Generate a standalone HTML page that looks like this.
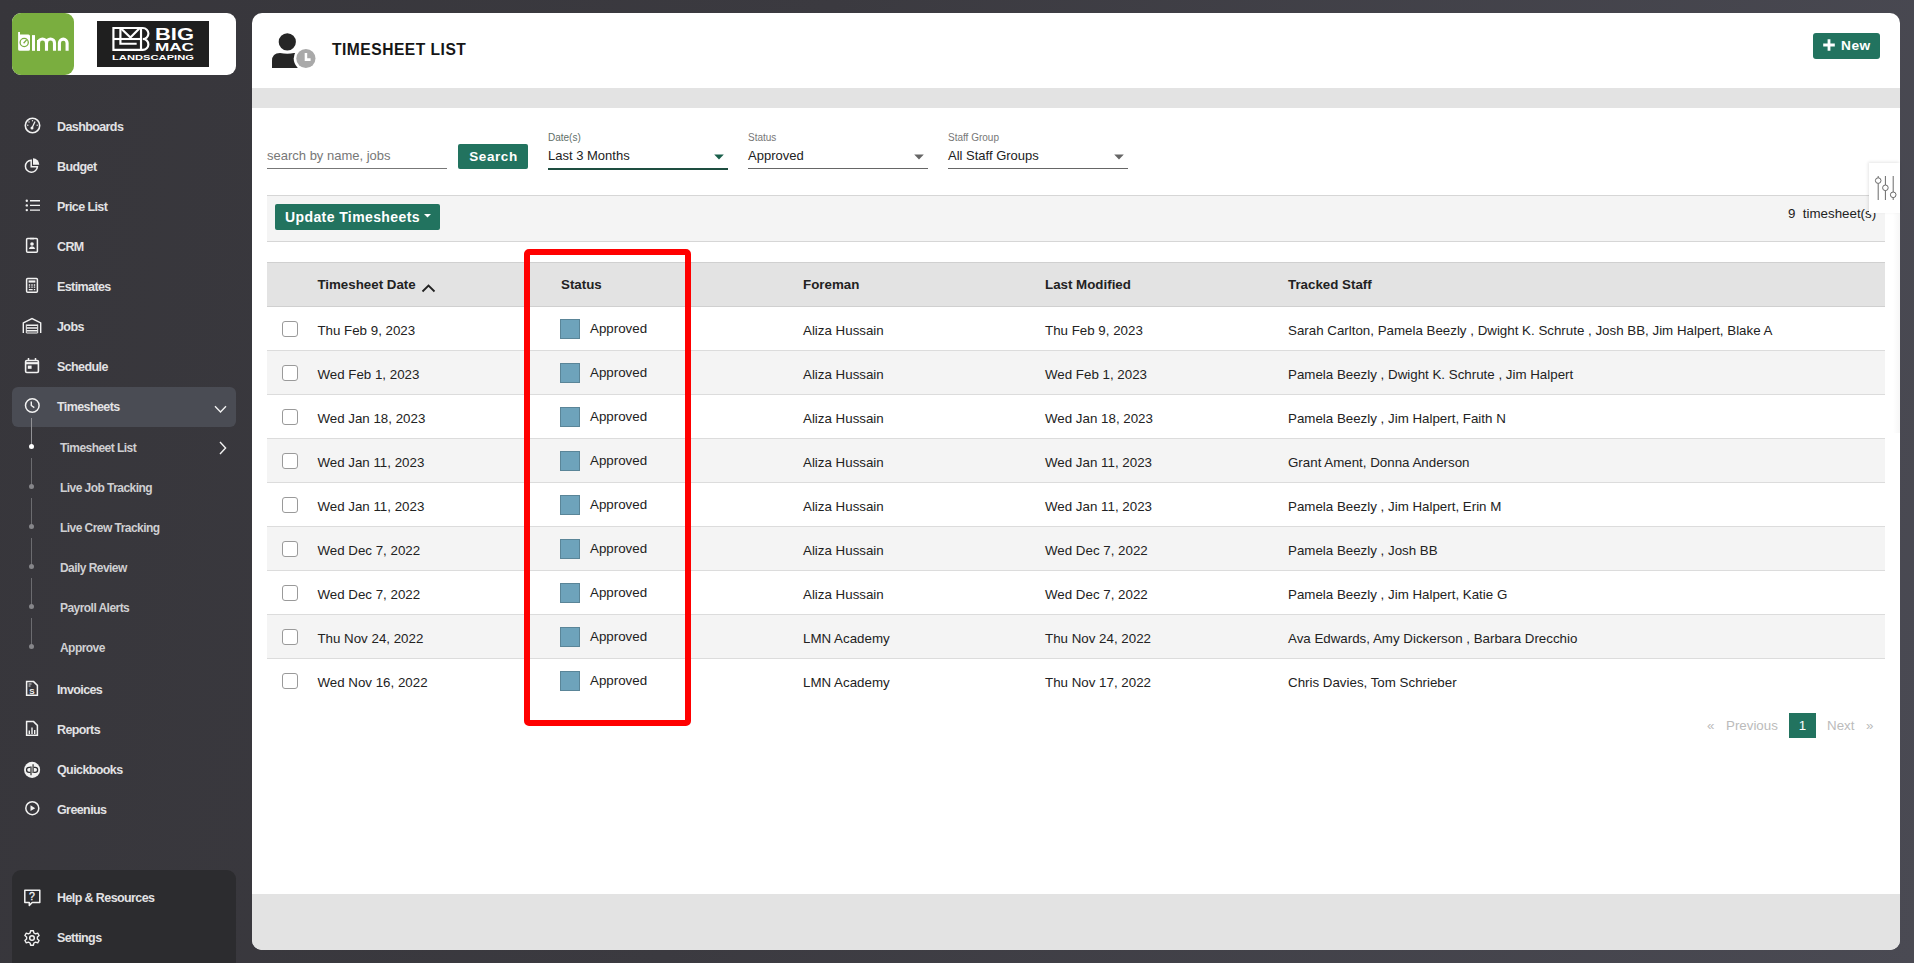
<!DOCTYPE html>
<html><head><meta charset="utf-8">
<style>
*{box-sizing:border-box;margin:0;padding:0}
html,body{width:1914px;height:963px;overflow:hidden}
body{font-family:"Liberation Sans",sans-serif;background:linear-gradient(100deg,#37363b 0%,#3b3a40 40%,#4a4a53 100%);position:relative;color:#222}
.abs{position:absolute}
/* sidebar */
.logo{left:12px;top:12.5px;width:224px;height:62.5px;background:#fff;border-radius:9px}
.lmn{left:12px;top:13px;width:62px;height:62px;background:#7aae3f;border-radius:9px}
.bm{left:97px;top:21px;width:112px;height:46px;background:#1f1f1f}
.nav{left:57px;margin-top:0.6px;font-size:12.5px;font-weight:700;color:#e2e2e4;letter-spacing:-0.6px;white-space:nowrap;line-height:14px}
.ico{left:24px;width:17px;height:17px}
.sub{left:60px;margin-top:0.4px;font-size:12px;font-weight:700;color:#cfcfd2;letter-spacing:-0.55px;white-space:nowrap;line-height:14px}
.dot{left:29px;width:5px;height:5px;border-radius:50%;background:#8a8a8e}
.vline{left:31px;width:1px;background:#5c5c60}
/* card */
.card{left:252px;top:12.5px;width:1648px;height:937px;background:#fff;border-radius:10px;overflow:hidden}
.t{white-space:nowrap;font-size:13.33px;line-height:16px;color:#222}
.b{font-weight:700}
.btn{background:#22735f;color:#fff;font-weight:700;border-radius:2px}
.row{left:267px;width:1618px;height:44px;border-top:1px solid #dcdcdc}
.cb{left:282px;width:16px;height:16px;border:1px solid #9a9a9a;border-radius:3px;background:#fff}
.sq{left:560px;width:20px;height:20px;background:#6ea3bb;border:1px solid #5a8598}
</style></head><body>
<!-- SIDEBAR -->
<div class="abs logo"></div>
<div class="abs lmn"></div>
<svg class="abs" style="left:14px;top:26px" width="60" height="30" viewBox="0 0 60 30">
<path d="M4.1 6 H6 V8.5 H14.4 Q16 8.5 16 10.1 V23.2 Q16 24.8 14.4 24.8 H5.7 Q4.1 24.8 4.1 23.2 Z" fill="#fff"/>
<circle cx="10.2" cy="16.5" r="4.1" fill="none" stroke="#7aae3f" stroke-width="1.3"/>
<path d="M9.6 17.2 L12.8 13.6" stroke="#7aae3f" stroke-width="1.3"/>
<rect x="18" y="9.1" width="3" height="15.7" fill="#fff"/>
<path d="M24.5 24.8 V17 A4 4 0 0 1 32.5 17 V24.8 M32.5 17 A4 4 0 0 1 40.5 17 V24.8" fill="none" stroke="#fff" stroke-width="3.1"/>
<path d="M45.4 24.8 V17 A3.8 3.8 0 0 1 53.1 17 V24.8" fill="none" stroke="#fff" stroke-width="3.1"/>
<rect x="23" y="14" width="3" height="10.8" fill="#fff"/>
</svg>
<div class="abs bm"></div>
<svg class="abs" style="left:97px;top:21px" width="112" height="46" viewBox="0 0 112 46">
<g transform="translate(11,3) translate(22.9,15) scale(0.945,0.92) translate(-22.9,-15)" fill="none" stroke="#fff" stroke-width="2.3">
<path d="M33.6 3.1 H4.4 V26.8 H33.6"/>
<path d="M4.4 15 H33.6"/>
<path d="M11.8 3.1 V20.2 H29"/>
<path d="M33.6 3.1 V26.8"/>
<path d="M12.5 3.6 L22.4 13.4 L31.8 3.6"/>
<path d="M33.6 3.1 H35.5 A5.95 5.95 0 0 1 35.5 15 A5.9 5.9 0 0 1 35.5 26.8 H33.6"/>
</g>
<text x="58" y="19.3" font-family="Liberation Sans" font-weight="700" font-size="16.5" fill="#fff" textLength="39" lengthAdjust="spacingAndGlyphs">BIG</text>
<text x="58" y="30.2" font-family="Liberation Sans" font-weight="700" font-size="11.5" fill="#fff" textLength="39" lengthAdjust="spacingAndGlyphs">MAC</text>
<text x="15" y="39.3" font-family="Liberation Sans" font-weight="700" font-size="7.6" fill="#fff" textLength="82" lengthAdjust="spacingAndGlyphs">LANDSCAPING</text>
</svg>
<div id="navs">
<div class="abs" style="left:12px;top:387px;width:224px;height:40px;background:#4a4c54;border-radius:6px"></div>
<div class="abs" style="left:12px;top:870px;width:224px;height:100px;background:#2c2c2f;border-radius:9px"></div>
<div class="abs nav" style="top:119.4px">Dashboards</div>
<svg class="abs" style="left:24px;top:117px" width="17" height="17" viewBox="0 0 17 17"><circle cx="8.5" cy="8.5" r="7.2" fill="none" stroke="#f2f2f2" stroke-width="1.6"/><circle cx="8" cy="11" r="1.5" fill="#f2f2f2"/><path d="M8 11 L11 4.5" stroke="#f2f2f2" stroke-width="1.3"/><circle cx="5" cy="5" r="0.7" fill="#f2f2f2"/><circle cx="8.5" cy="3.8" r="0.7" fill="#f2f2f2"/><circle cx="3.8" cy="8.3" r="0.7" fill="#f2f2f2"/><circle cx="13.2" cy="8.3" r="0.7" fill="#f2f2f2"/></svg>
<div class="abs nav" style="top:159.4px">Budget</div>
<svg class="abs" style="left:24px;top:157px" width="17" height="17" viewBox="0 0 17 17"><path d="M7.2 3.2 A6 6 0 1 0 13.4 9.8 L7.2 9.8 Z" fill="none" stroke="#f2f2f2" stroke-width="1.5"/><path d="M9 1.2 A6.5 6.5 0 0 1 15.3 7.8 L9 7.8 Z" fill="#f2f2f2"/></svg>
<div class="abs nav" style="top:199.4px">Price List</div>
<svg class="abs" style="left:24px;top:198px" width="17" height="15" viewBox="0 0 17 15"><circle cx="2.8" cy="2.8" r="1.2" fill="#f2f2f2"/><circle cx="2.8" cy="7.4" r="1.2" fill="#f2f2f2"/><circle cx="2.8" cy="12.1" r="1.2" fill="#f2f2f2"/><path d="M6 2.8H16M6 7.4H16M6 12.1H16" stroke="#f2f2f2" stroke-width="1.4"/></svg>
<div class="abs nav" style="top:239.4px">CRM</div>
<svg class="abs" style="left:25px;top:237px" width="14" height="17" viewBox="0 0 14 17"><rect x="1.6" y="1.6" width="10.8" height="13.6" rx="1" fill="none" stroke="#f2f2f2" stroke-width="1.5"/><path d="M5 1.6 H9" stroke="#f2f2f2" stroke-width="1.5"/><circle cx="7" cy="7" r="1.8" fill="#f2f2f2"/><path d="M3.8 12 Q4.5 9.3 7 9.3 Q9.5 9.3 10.2 12 Z" fill="#f2f2f2"/></svg>
<div class="abs nav" style="top:279.4px">Estimates</div>
<svg class="abs" style="left:25px;top:277px" width="14" height="17" viewBox="0 0 14 17"><rect x="1.6" y="1.6" width="10.8" height="13.6" rx="1" fill="none" stroke="#f2f2f2" stroke-width="1.5"/><rect x="3.6" y="3.4" width="6.8" height="2.2" fill="#f2f2f2"/><path d="M3.8 8H5.2M6.3 8H7.7M8.8 8H10.2M3.8 10.2H5.2M6.3 10.2H7.7M8.8 10.2H10.2M3.8 12.6H7.7M8.8 12.6H10.2" stroke="#f2f2f2" stroke-width="1.3"/></svg>
<div class="abs nav" style="top:319.4px">Jobs</div>
<svg class="abs" style="left:22px;top:317px" width="20" height="17" viewBox="0 0 20 17"><path d="M1.3 16 V6 L10 1.6 L18.7 6 V16" fill="none" stroke="#f2f2f2" stroke-width="1.4"/><path d="M4.5 8.2H15.5M4.5 11H15.5M4.5 13.8H15.5" stroke="#f2f2f2" stroke-width="1.6"/><path d="M4.5 16H15.5" stroke="#f2f2f2" stroke-width="1"/><path d="M4.3 7.5V16M15.7 7.5V16" stroke="#f2f2f2" stroke-width="1"/></svg>
<div class="abs nav" style="top:359.4px">Schedule</div>
<svg class="abs" style="left:24px;top:357px" width="16" height="17" viewBox="0 0 16 17"><rect x="1.6" y="3.5" width="12.8" height="12" rx="1.2" fill="none" stroke="#f2f2f2" stroke-width="1.6"/><path d="M1.6 6.2H14.4" stroke="#f2f2f2" stroke-width="2.2"/><path d="M4.5 1V4M11.5 1V4" stroke="#f2f2f2" stroke-width="1.5"/><rect x="3.8" y="8.6" width="3.8" height="3.2" fill="#f2f2f2"/></svg>
<div class="abs nav" style="top:399.2px">Timesheets</div>
<svg class="abs" style="left:24px;top:397px" width="17" height="17" viewBox="0 0 17 17"><circle cx="8.3" cy="8.5" r="6.8" fill="none" stroke="#f2f2f2" stroke-width="1.5"/><path d="M7.3 4.5V8.5L10.3 10.6" fill="none" stroke="#f2f2f2" stroke-width="1.4"/></svg>
<div class="abs nav" style="top:682.2px">Invoices</div>
<svg class="abs" style="left:25px;top:680px" width="14" height="17" viewBox="0 0 14 17"><path d="M1.6 1.6H8.6L12.4 5.4V15.2H1.6Z" fill="none" stroke="#f2f2f2" stroke-width="1.5"/><path d="M3.6 4H6.5M3.6 6H5.5" stroke="#f2f2f2" stroke-width="0.9"/><text x="4.2" y="14" font-family="Liberation Sans" font-size="8" font-weight="700" fill="#f2f2f2">S</text></svg>
<div class="abs nav" style="top:722.2px">Reports</div>
<svg class="abs" style="left:25px;top:720px" width="14" height="17" viewBox="0 0 14 17"><path d="M1.6 1.6H8.6L12.4 5.4V15.2H1.6Z" fill="none" stroke="#f2f2f2" stroke-width="1.5"/><path d="M4.3 14V10.5M7 14V7.5M9.7 14V10" stroke="#f2f2f2" stroke-width="1.4"/></svg>
<div class="abs nav" style="top:762.2px">Quickbooks</div>
<svg class="abs" style="left:24px;top:761px" width="17" height="17" viewBox="0 0 17 17"><circle cx="8.1" cy="8.9" r="8.05" fill="#f2f2f2"/><path d="M6.9 6.3 H5.1 A2.55 2.55 0 0 0 5.1 11.4 H6.9 M9.3 6.3 H11.1 A2.55 2.55 0 0 1 11.1 11.4 H9.3" fill="none" stroke="#2e2e32" stroke-width="1.3"/><path d="M7 5.6 V14.3 M9.1 3.3 V12" stroke="#555" stroke-width="1.5"/></svg>
<div class="abs nav" style="top:802.2px">Greenius</div>
<svg class="abs" style="left:24px;top:800px" width="17" height="17" viewBox="0 0 17 17"><circle cx="8.3" cy="8.2" r="6.5" fill="none" stroke="#f2f2f2" stroke-width="1.5"/><path d="M6.5 5.3V11.1L11.2 8.2Z" fill="#f2f2f2"/></svg>
<div class="abs nav" style="top:890.2px">Help &amp; Resources</div>
<svg class="abs" style="left:23px;top:888px" width="18" height="19" viewBox="0 0 18 19"><path d="M1.8 2.2H16.8V14.5H9.2L6.3 17.4V14.5H1.8Z" fill="none" stroke="#f2f2f2" stroke-width="1.5" stroke-linejoin="round"/><text x="6" y="12.2" font-family="Liberation Sans" font-size="10.5" font-weight="400" stroke="#f2f2f2" stroke-width="0.3" fill="#f2f2f2">?</text></svg>
<div class="abs nav" style="top:930.2px">Settings</div>
<svg class="abs" style="left:23px;top:929px" width="18" height="18" viewBox="0 0 18 18"><path d="M7.6 1.3H10.4L10.9 3.5L12.6 4.4L14.7 3.6L16.1 6L14.4 7.5V9.5L16.1 11L14.7 13.4L12.6 12.6L10.9 13.5L10.4 15.7H7.6L7.1 13.5L5.4 12.6L3.3 13.4L1.9 11L3.6 9.5V7.5L1.9 6L3.3 3.6L5.4 4.4L7.1 3.5Z" transform="translate(0,0.5)" fill="none" stroke="#f2f2f2" stroke-width="1.4" stroke-linejoin="round"/><circle cx="9" cy="9" r="2.3" fill="none" stroke="#f2f2f2" stroke-width="1.5"/></svg>
<div class="abs" style="left:31px;top:418px;width:1px;height:28px;background:#929296"></div>
<div class="abs" style="left:28.6px;top:443.6px;width:5.6px;height:5.6px;border-radius:50%;background:#fff"></div>
<div class="abs sub" style="top:440.6px">Timesheet List</div>
<div class="abs" style="left:31px;top:458.4px;width:1px;height:28px;background:#6c6c70"></div>
<div class="abs" style="left:28.6px;top:483.6px;width:5.6px;height:5.6px;border-radius:50%;background:#86868a"></div>
<div class="abs sub" style="top:480.4px">Live Job Tracking</div>
<div class="abs" style="left:31px;top:498.4px;width:1px;height:28px;background:#6c6c70"></div>
<div class="abs" style="left:28.6px;top:523.6px;width:5.6px;height:5.6px;border-radius:50%;background:#86868a"></div>
<div class="abs sub" style="top:520.4px">Live Crew Tracking</div>
<div class="abs" style="left:31px;top:538.4px;width:1px;height:28px;background:#6c6c70"></div>
<div class="abs" style="left:28.6px;top:563.6px;width:5.6px;height:5.6px;border-radius:50%;background:#86868a"></div>
<div class="abs sub" style="top:560.4px">Daily Review</div>
<div class="abs" style="left:31px;top:578.4px;width:1px;height:28px;background:#6c6c70"></div>
<div class="abs" style="left:28.6px;top:603.6px;width:5.6px;height:5.6px;border-radius:50%;background:#86868a"></div>
<div class="abs sub" style="top:600.4px">Payroll Alerts</div>
<div class="abs" style="left:31px;top:618.4px;width:1px;height:28px;background:#6c6c70"></div>
<div class="abs" style="left:28.6px;top:643.6px;width:5.6px;height:5.6px;border-radius:50%;background:#86868a"></div>
<div class="abs sub" style="top:640.4px">Approve</div>
<svg class="abs" style="left:213px;top:403px" width="15" height="12" viewBox="0 0 15 12"><path d="M2 3.3 L7.5 9 L13 3.3" fill="none" stroke="#f2f2f2" stroke-width="1.4"/></svg>
<svg class="abs" style="left:217px;top:440px" width="11" height="16" viewBox="0 0 11 16"><path d="M3 2 L8.6 8 L3 14" fill="none" stroke="#f2f2f2" stroke-width="1.4"/></svg>
</div>
<!-- CARD -->
<div class="abs card">
  <div class="abs" style="left:0;top:75.5px;width:1648px;height:20px;background:#e3e3e3"></div>
  <div class="abs" style="left:0;top:881.5px;width:1648px;height:60px;background:#e3e3e3"></div>
</div>
<div class="abs t b" style="left:332px;top:40.5px;font-size:15.6px;line-height:18px;color:#161616;letter-spacing:0.5px">TIMESHEET LIST</div>
<svg class="abs" style="left:265px;top:25px" width="60" height="50" viewBox="0 0 60 50">
<defs><mask id="mk"><rect x="0" y="0" width="60" height="50" fill="#fff"/><circle cx="40.9" cy="33.5" r="12.2" fill="#000"/></mask></defs>
<circle cx="22.3" cy="16.9" r="8.6" fill="#262626"/>
<path d="M7 43.1 V36 Q7 28 15 28 Q18.5 28.8 22.3 28.8 Q26 28.8 29 28 H33.2 V43.1 Z" fill="#262626" mask="url(#mk)"/>
<circle cx="40.9" cy="33.5" r="9.6" fill="#a9a9a9"/>
<path d="M39.7 28 H42.2 V33.3 H45.6 V35.9 H39.7 Z" fill="#fff"/>
</svg>
<div class="abs btn" style="left:1813px;top:33px;width:67px;height:26px;border-radius:3px"></div>
<svg class="abs" style="left:1823px;top:39px" width="12" height="12" viewBox="0 0 12 12"><path d="M6 0.2V11.8M0.2 6H11.8" stroke="#fff" stroke-width="2.8"/></svg>
<div class="abs t b" style="left:1841px;top:37.5px;font-size:13.7px;color:#fff;letter-spacing:0.5px">New</div>

<!-- filters -->
<div class="abs t" style="left:267px;top:148px;color:#777;font-size:13px">search by name, jobs</div>
<div class="abs" style="left:267px;top:168px;width:180px;height:1px;background:#777"></div>
<div class="abs btn" style="left:458px;top:144px;width:70px;height:25px;font-size:13.5px;line-height:25px;text-align:center;letter-spacing:0.6px;padding-left:1px">Search</div>

<div class="abs t" style="left:548px;top:132px;font-size:10px;line-height:12px;color:#5f6f68">Date(s)</div>
<div class="abs t" style="left:548px;top:148px;font-size:13px">Last 3 Months</div>
<div class="abs" style="left:548px;top:168px;width:180px;height:2px;background:#1e4d40"></div>
<svg class="abs" style="left:714px;top:153.5px" width="10" height="6" viewBox="0 0 10 6"><path d="M0.2 0.5H9.8L5 5.5Z" fill="#1a5f4b"/></svg>
<div class="abs t" style="left:748px;top:132px;font-size:10px;line-height:12px;color:#777">Status</div>
<div class="abs t" style="left:748px;top:148px;font-size:13px">Approved</div>
<div class="abs" style="left:748px;top:168px;width:180px;height:1px;background:#666"></div>
<svg class="abs" style="left:914px;top:153.5px" width="10" height="6" viewBox="0 0 10 6"><path d="M0.2 0.5H9.8L5 5.5Z" fill="#666"/></svg>
<div class="abs t" style="left:948px;top:132px;font-size:10px;line-height:12px;color:#777">Staff Group</div>
<div class="abs t" style="left:948px;top:148px;font-size:13px">All Staff Groups</div>
<div class="abs" style="left:948px;top:168px;width:180px;height:1px;background:#666"></div>
<svg class="abs" style="left:1113.7px;top:153.5px" width="10" height="6" viewBox="0 0 10 6"><path d="M0.2 0.5H9.8L5 5.5Z" fill="#666"/></svg>

<!-- toolbar -->
<div class="abs" style="left:267px;top:195px;width:1618px;height:47px;background:#f4f4f4;border-top:1px solid #d6d6d6;border-bottom:1px solid #d6d6d6"></div>
<div class="abs btn" style="left:275px;top:204px;width:165px;height:26px;font-size:14px;line-height:26px;padding-left:10px;letter-spacing:0.4px">Update Timesheets</div>
<svg class="abs" style="left:424px;top:214px" width="7" height="4" viewBox="0 0 7 4"><path d="M0 0H7L3.5 3.5Z" fill="#fff"/></svg>
<div class="abs t" style="left:1788px;top:206px">9&nbsp; timesheet(s)</div>
<div class="abs" style="left:1869px;top:163px;width:31px;height:50px;background:#fff;box-shadow:-1px -1px 3px rgba(0,0,0,0.10)"></div>
<svg class="abs" style="left:1869px;top:163px" width="31" height="50" viewBox="0 0 31 50">
<g stroke="#6a6a6a" stroke-width="1" fill="#fff">
<path d="M9.2 13V37M16.4 13V37M24.2 13V37"/>
<circle cx="9.2" cy="17.6" r="2.8"/><circle cx="16.4" cy="24.8" r="2.8"/><circle cx="24.2" cy="31.8" r="2.8"/>
</g></svg>

<!-- table header -->
<div class="abs" style="left:267px;top:262px;width:1618px;height:45px;background:#e3e3e3;border-top:1px solid #d0d0d0;border-bottom:1px solid #d0d0d0"></div>
<div class="abs t b" style="left:317.4px;top:277px">Timesheet Date</div>
<svg class="abs" style="left:421px;top:283px" width="15" height="10" viewBox="0 0 15 10"><path d="M1.5 8.5L7.5 2.5L13.5 8.5" fill="none" stroke="#222" stroke-width="1.8"/></svg>
<div class="abs t b" style="left:561px;top:277px">Status</div>
<div class="abs t b" style="left:803px;top:277px">Foreman</div>
<div class="abs t b" style="left:1045px;top:277px">Last Modified</div>
<div class="abs t b" style="left:1288px;top:277px">Tracked Staff</div>

<div id="rows">
<div class="abs" style="left:267px;top:306px;width:1618px;height:44px;background:#fff;border-top:1px solid #d0d0d0;"></div>
<div class="abs cb" style="top:321px"></div>
<div class="abs t" style="left:317.4px;top:323px">Thu Feb 9, 2023</div>
<div class="abs sq" style="top:319px"></div>
<div class="abs t" style="left:590px;top:321px">Approved</div>
<div class="abs t" style="left:803px;top:323px">Aliza Hussain</div>
<div class="abs t" style="left:1045px;top:323px">Thu Feb 9, 2023</div>
<div class="abs t" style="left:1288px;top:323px">Sarah Carlton, Pamela Beezly , Dwight K. Schrute , Josh BB, Jim Halpert, Blake A</div>
<div class="abs" style="left:267px;top:350px;width:1618px;height:44px;background:#f4f4f4;border-top:1px solid #dcdcdc;"></div>
<div class="abs cb" style="top:365px"></div>
<div class="abs t" style="left:317.4px;top:367px">Wed Feb 1, 2023</div>
<div class="abs sq" style="top:363px"></div>
<div class="abs t" style="left:590px;top:365px">Approved</div>
<div class="abs t" style="left:803px;top:367px">Aliza Hussain</div>
<div class="abs t" style="left:1045px;top:367px">Wed Feb 1, 2023</div>
<div class="abs t" style="left:1288px;top:367px">Pamela Beezly , Dwight K. Schrute , Jim Halpert</div>
<div class="abs" style="left:267px;top:394px;width:1618px;height:44px;background:#fff;border-top:1px solid #dcdcdc;"></div>
<div class="abs cb" style="top:409px"></div>
<div class="abs t" style="left:317.4px;top:411px">Wed Jan 18, 2023</div>
<div class="abs sq" style="top:407px"></div>
<div class="abs t" style="left:590px;top:409px">Approved</div>
<div class="abs t" style="left:803px;top:411px">Aliza Hussain</div>
<div class="abs t" style="left:1045px;top:411px">Wed Jan 18, 2023</div>
<div class="abs t" style="left:1288px;top:411px">Pamela Beezly , Jim Halpert, Faith N</div>
<div class="abs" style="left:267px;top:438px;width:1618px;height:44px;background:#f4f4f4;border-top:1px solid #dcdcdc;"></div>
<div class="abs cb" style="top:453px"></div>
<div class="abs t" style="left:317.4px;top:455px">Wed Jan 11, 2023</div>
<div class="abs sq" style="top:451px"></div>
<div class="abs t" style="left:590px;top:453px">Approved</div>
<div class="abs t" style="left:803px;top:455px">Aliza Hussain</div>
<div class="abs t" style="left:1045px;top:455px">Wed Jan 11, 2023</div>
<div class="abs t" style="left:1288px;top:455px">Grant Ament, Donna Anderson</div>
<div class="abs" style="left:267px;top:482px;width:1618px;height:44px;background:#fff;border-top:1px solid #dcdcdc;"></div>
<div class="abs cb" style="top:497px"></div>
<div class="abs t" style="left:317.4px;top:499px">Wed Jan 11, 2023</div>
<div class="abs sq" style="top:495px"></div>
<div class="abs t" style="left:590px;top:497px">Approved</div>
<div class="abs t" style="left:803px;top:499px">Aliza Hussain</div>
<div class="abs t" style="left:1045px;top:499px">Wed Jan 11, 2023</div>
<div class="abs t" style="left:1288px;top:499px">Pamela Beezly , Jim Halpert, Erin M</div>
<div class="abs" style="left:267px;top:526px;width:1618px;height:44px;background:#f4f4f4;border-top:1px solid #dcdcdc;"></div>
<div class="abs cb" style="top:541px"></div>
<div class="abs t" style="left:317.4px;top:543px">Wed Dec 7, 2022</div>
<div class="abs sq" style="top:539px"></div>
<div class="abs t" style="left:590px;top:541px">Approved</div>
<div class="abs t" style="left:803px;top:543px">Aliza Hussain</div>
<div class="abs t" style="left:1045px;top:543px">Wed Dec 7, 2022</div>
<div class="abs t" style="left:1288px;top:543px">Pamela Beezly , Josh BB</div>
<div class="abs" style="left:267px;top:570px;width:1618px;height:44px;background:#fff;border-top:1px solid #dcdcdc;"></div>
<div class="abs cb" style="top:585px"></div>
<div class="abs t" style="left:317.4px;top:587px">Wed Dec 7, 2022</div>
<div class="abs sq" style="top:583px"></div>
<div class="abs t" style="left:590px;top:585px">Approved</div>
<div class="abs t" style="left:803px;top:587px">Aliza Hussain</div>
<div class="abs t" style="left:1045px;top:587px">Wed Dec 7, 2022</div>
<div class="abs t" style="left:1288px;top:587px">Pamela Beezly , Jim Halpert, Katie G</div>
<div class="abs" style="left:267px;top:614px;width:1618px;height:44px;background:#f4f4f4;border-top:1px solid #dcdcdc;"></div>
<div class="abs cb" style="top:629px"></div>
<div class="abs t" style="left:317.4px;top:631px">Thu Nov 24, 2022</div>
<div class="abs sq" style="top:627px"></div>
<div class="abs t" style="left:590px;top:629px">Approved</div>
<div class="abs t" style="left:803px;top:631px">LMN Academy</div>
<div class="abs t" style="left:1045px;top:631px">Thu Nov 24, 2022</div>
<div class="abs t" style="left:1288px;top:631px">Ava Edwards, Amy Dickerson , Barbara Drecchio</div>
<div class="abs" style="left:267px;top:658px;width:1618px;height:44px;background:#fff;border-top:1px solid #dcdcdc;"></div>
<div class="abs cb" style="top:673px"></div>
<div class="abs t" style="left:317.4px;top:675px">Wed Nov 16, 2022</div>
<div class="abs sq" style="top:671px"></div>
<div class="abs t" style="left:590px;top:673px">Approved</div>
<div class="abs t" style="left:803px;top:675px">LMN Academy</div>
<div class="abs t" style="left:1045px;top:675px">Thu Nov 17, 2022</div>
<div class="abs t" style="left:1288px;top:675px">Chris Davies, Tom Schrieber</div>
</div>
<!-- red box -->
<div class="abs" style="left:523.5px;top:248.5px;width:167px;height:477px;border:6px solid #f00;border-radius:5px"></div>

<div class="abs" style="left:1893px;top:213px;width:7px;height:220px;background:linear-gradient(90deg,rgba(0,0,0,0),rgba(0,0,0,0.035));"></div>
<!-- pagination -->
<div class="abs t" style="left:1707px;top:718px;color:#bbb">«</div>
<div class="abs t" style="left:1726px;top:718px;color:#bbb">Previous</div>
<div class="abs btn" style="left:1789px;top:713px;width:27px;height:25px;line-height:25px;text-align:center;font-size:13.33px;font-weight:400;border-radius:0">1</div>
<div class="abs t" style="left:1827px;top:718px;color:#bbb">Next</div>
<div class="abs t" style="left:1866px;top:718px;color:#bbb">»</div>
</body></html>
